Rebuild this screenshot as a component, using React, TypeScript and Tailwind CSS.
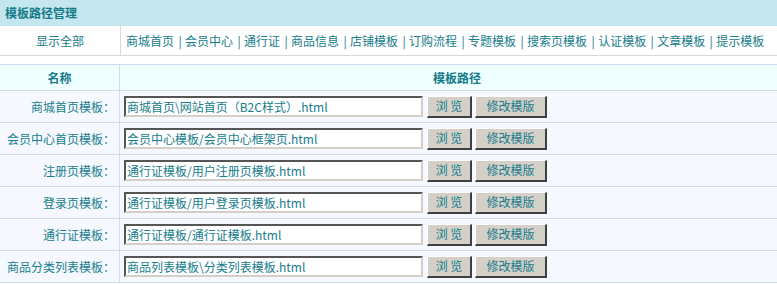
import React from 'react';

const navLinks = [
  '商城首页', '会员中心', '通行证', '商品信息', '店铺模板', '订购流程',
  '专题模板', '搜索页模板', '认证模板', '文章模板', '提示模板',
];

const templates = [
  { label: '商城首页模板：', path: '商城首页\\网站首页（B2C样式）.html' },
  { label: '会员中心首页模板：', path: '会员中心模板/会员中心框架页.html' },
  { label: '注册页模板：', path: '通行证模板/用户注册页模板.html' },
  { label: '登录页模板：', path: '通行证模板/用户登录页模板.html' },
  { label: '通行证模板：', path: '通行证模板/通行证模板.html' },
  { label: '商品分类列表模板：', path: '商品列表模板\\分类列表模板.html' },
];

const Btn: React.FC<{ w: string; children: React.ReactNode }> = ({ w, children }) => (
  <button
    className={`${w} h-[22px] bg-[#d4d0c8] border-t border-l border-t-white border-l-white border-r-2 border-b-2 border-r-[#404040] border-b-[#404040] text-[12px] leading-none text-[#177d8c] flex items-center justify-center`}
  >
    {children}
  </button>
);

export default function App() {
  return (
    <div
      className="w-[777px] h-[284px] overflow-hidden bg-white text-[12px] text-[#177d8c]"
      style={{ fontFamily: '"Noto Sans CJK SC", "Liberation Sans", sans-serif' }}
    >
      <div className="w-[794px]">
        {/* title bar */}
        <div className="h-[26px] bg-[#c4e6ef] pl-[5px] flex items-center font-bold text-[#157a89]">
          模板路径管理
        </div>

        {/* filter row */}
        <div className="flex h-[30px] border-b border-[#d2d8df]">
          <div className="w-[121px] border-r border-[#d2dbe6] flex items-center justify-center">
            显示全部
          </div>
          <div className="flex items-center pl-[5px]">
            {navLinks.map((n, i) => (
              <React.Fragment key={n}>
                {i > 0 && <span className="w-[11px] text-center pl-[1px]">|</span>}
                <span>{n}</span>
              </React.Fragment>
            ))}
          </div>
        </div>

        <div className="h-[8px]" />

        {/* table */}
        <div className="border-t border-[#cfdbee]">
          <div className="flex h-[26px] bg-[#efffff] border-b border-[#cfdbee] font-bold text-[#157a89]">
            <div className="w-[120px] border-r border-[#cfdbee] flex items-center justify-center">名称</div>
            <div className="flex-1 flex items-center justify-center">模板路径</div>
          </div>

          {templates.map((t) => (
            <div key={t.label} className="flex h-[32px] bg-[#f5f9ff] border-b border-[#cfdbee]">
              <div className="w-[120px] border-r border-[#d3dded] flex items-center justify-end pr-[4px]">
                {t.label}
              </div>
              <div className="flex-1 flex items-center pl-[4px] gap-[4px]">
                <div className="w-[299px] h-[21px] bg-white border-2 border-t-[#555555] border-l-[#555555] border-r-[#d4d0c8] border-b-[#d4d0c8] pl-[1px] flex items-center whitespace-nowrap overflow-hidden">
                  {t.path}
                </div>
                <div className="flex gap-[3px]">
                  <Btn w="w-[45px]">浏 览</Btn>
                  <Btn w="w-[72px]">修改模版</Btn>
                </div>
              </div>
            </div>
          ))}
        </div>
      </div>
    </div>
  );
}
